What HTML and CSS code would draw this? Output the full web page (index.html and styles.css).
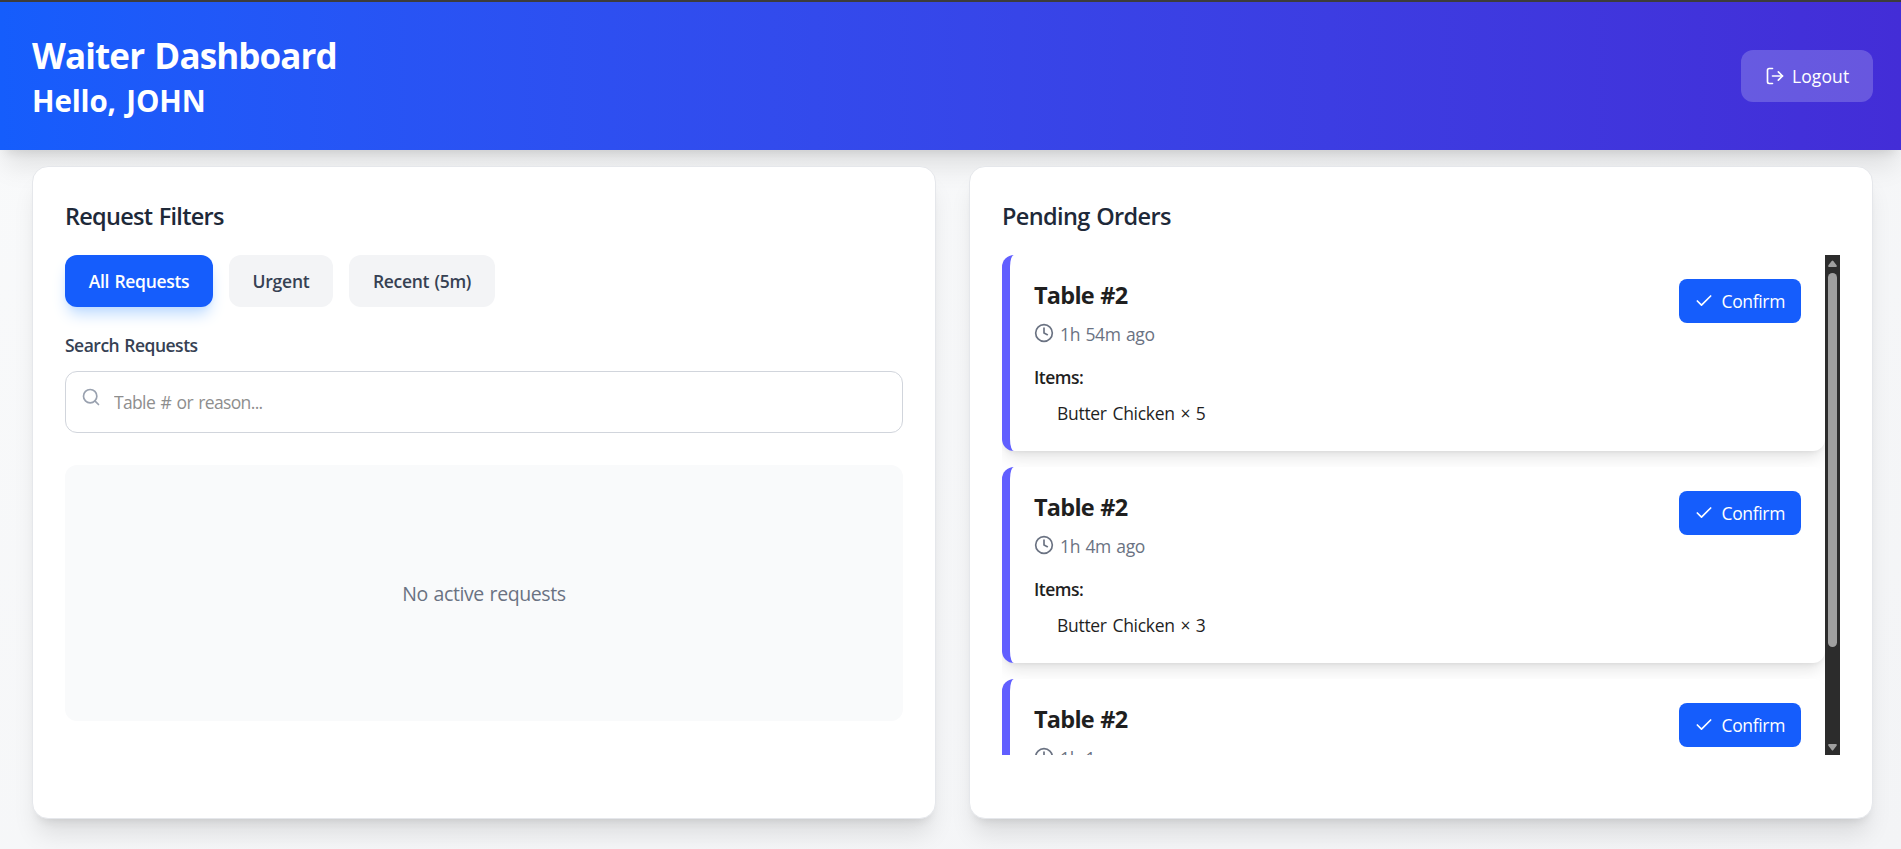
FILE: index.html
```html
<!DOCTYPE html>
<html lang="en">
<head>
<meta charset="utf-8">
<title>Waiter Dashboard</title>
<link rel="stylesheet" href="styles.css">
</head>
<body>
<svg class="sprite" aria-hidden="true">
  <symbol id="logout" viewBox="0 0 24 24"><path d="M9 21H5a2 2 0 0 1-2-2V5a2 2 0 0 1 2-2h4"/><polyline points="16 17 21 12 16 7"/><line x1="21" y1="12" x2="9" y2="12"/></symbol>
  <symbol id="search" viewBox="0 0 24 24"><circle cx="11" cy="11" r="8"/><line x1="21" y1="21" x2="16.65" y2="16.65"/></symbol>
  <symbol id="clock" viewBox="0 0 24 24"><circle cx="12" cy="12" r="10"/><polyline points="12 6 12 12 16 14"/></symbol>
  <symbol id="check" viewBox="0 0 24 24"><polyline points="20 6 9 17 4 12"/></symbol>
</svg>
<header class="header">
  <div class="greeting">
    <h1 class="title">Waiter Dashboard</h1>
    <h2 class="hello">Hello, JOHN</h2>
  </div>
  <button class="logout"><svg class="icon"><use href="#logout"/></svg><span>Logout</span></button>
</header>
<main class="main">
  <section class="panel">
    <h2 class="panel-title filters-title">Request Filters</h2>
    <div class="filters">
      <button class="filter filter-all">All Requests</button>
      <button class="filter filter-urgent">Urgent</button>
      <button class="filter filter-recent">Recent (5m)</button>
    </div>
    <label class="label" for="q">Search Requests</label>
    <div class="search">
      <svg class="icon search-icon"><use href="#search"/></svg>
      <input class="search-input" id="q" type="text" placeholder="Table # or reason...">
    </div>
    <div class="empty">No active requests</div>
  </section>
  <section class="panel">
    <h2 class="panel-title orders-title">Pending Orders</h2>
    <div class="scroller">
      <div class="orders">
        <article class="order">
          <div class="order-head">
            <div>
              <h3 class="table">Table #2</h3>
              <p class="time"><svg class="icon"><use href="#clock"/></svg><span>1h 54m ago</span></p>
            </div>
            <button class="confirm"><svg class="icon"><use href="#check"/></svg><span>Confirm</span></button>
          </div>
          <h4 class="items">Items:</h4>
          <p class="item">Butter Chicken × 5</p>
        </article>
        <article class="order">
          <div class="order-head">
            <div>
              <h3 class="table">Table #2</h3>
              <p class="time"><svg class="icon"><use href="#clock"/></svg><span>1h 4m ago</span></p>
            </div>
            <button class="confirm"><svg class="icon"><use href="#check"/></svg><span>Confirm</span></button>
          </div>
          <h4 class="items">Items:</h4>
          <p class="item">Butter Chicken × 3</p>
        </article>
        <article class="order">
          <div class="order-head">
            <div>
              <h3 class="table">Table #2</h3>
              <p class="time"><svg class="icon"><use href="#clock"/></svg><span>1h 1m ago</span></p>
            </div>
            <button class="confirm"><svg class="icon"><use href="#check"/></svg><span>Confirm</span></button>
          </div>
        </article>
      </div>
      <div class="scrollbar">
        <svg class="arrow" viewBox="0 0 9 7"><path d="M3.7 1Q4.5-.2 5.3 1L8.6 5.2Q9.2 7 8 7H1Q-.2 7 .4 5.2Z"/></svg>
        <div class="thumb"></div>
        <svg class="arrow arrow-down" viewBox="0 0 9 7"><path d="M3.7 6Q4.5 7.2 5.3 6L8.6 1.8Q9.2 0 8 0H1Q-.2 0 .4 1.8Z"/></svg>
      </div>
    </div>
  </section>
</main>
</body>
</html>
```
FILE: styles.css
```css
* { box-sizing: border-box; margin: 0; padding: 0; }
body {
  height: 849px;
  overflow: hidden;
  font: 400 17.5px/27px "Open Sans", "Noto Sans", sans-serif;
  color: #1f1f1f;
  background: linear-gradient(to bottom right, #f9fafb, #f3f4f6);
  border-top: 2px solid #3c3c3c;
}
.sprite { display: none; }
button { border: 0; font: inherit; display: flex; align-items: center; white-space: nowrap; }
.icon {
  width: 20px; height: 20px; flex: none;
  fill: none; stroke: currentColor; stroke-width: 2;
  stroke-linecap: round; stroke-linejoin: round;
}
.header {
  height: 148px;
  padding: 0 28px 0 32px;
  display: flex; align-items: center; justify-content: space-between;
  color: #fff;
  background: linear-gradient(to right in oklab, #155dfc, #432dd7);
  box-shadow: 0 20px 25px -5px rgba(0,0,0,.1), 0 8px 10px -6px rgba(0,0,0,.1);
}
.greeting { padding-top: 4px; }
.title { font-size: 35px; line-height: 45px; font-weight: 700; letter-spacing: -.88px; word-spacing: 2px; }
.hello { font-size: 29.5px; line-height: 45px; font-weight: 700; letter-spacing: -.15px; word-spacing: 3px; }
.logout {
  width: 132px; height: 52px; padding-left: 24px; gap: 7px;
  border-radius: 12px; color: #fff; background: rgba(255,255,255,.2);
  letter-spacing: .1px;
}
.main {
  display: grid; grid-template-columns: 1fr 1fr; gap: 33px;
  padding: 16px 28px 0 32px;
}
.panel {
  height: 653px; padding: 31.5px 32px;
  border: 1px solid #e5e7eb; border-radius: 16px; background: #fff;
  box-shadow: 0 20px 25px -5px rgba(0,0,0,.1), 0 8px 10px -6px rgba(0,0,0,.1);
}
.panel-title {
  font-size: 23.5px; line-height: 35px; font-weight: 540; word-spacing: 1px;
  color: #1e2939; margin-bottom: 21.5px;
}
.filters-title { letter-spacing: -.72px; }
.orders-title { letter-spacing: -.62px; }
.filters { display: flex; gap: 16px; }
.filter {
  height: 52px; justify-content: center; border-radius: 12px;
  font-weight: 600; color: #364153; background: #f3f4f6; word-spacing: 1px;
}
.filter-all {
  width: 148px; letter-spacing: -.3px; color: #fff; background: #155dfc;
  box-shadow: 0 10px 15px -3px #bedbff, 0 4px 6px -4px #bedbff;
}
.filter-urgent { width: 104px; letter-spacing: -.2px; }
.filter-recent { width: 146px; letter-spacing: -.3px; }
.label {
  display: block; margin: 25px 0 12px;
  font-weight: 600; color: #364153; letter-spacing: -.5px; word-spacing: 1px;
}
.search { position: relative; }
.search-input {
  display: block; width: 100%; height: 62px; padding: 0 16px 0 48px;
  border: 1px solid #d1d5dc; border-radius: 12px; outline: 0; background: #fff;
  font: inherit; letter-spacing: -.65px; word-spacing: 1.5px;
}
.search-input::placeholder { color: #8e8e8e; }
.search-icon { position: absolute; left: 16px; top: 16px; color: #99a1af; }
.empty {
  height: 256px; margin-top: 32px; border-radius: 12px; background: #f9fafb;
  display: flex; align-items: center; justify-content: center;
  font-size: 19.5px; letter-spacing: -.4px; word-spacing: 1px; color: #6a7282;
}
.scroller { height: 500px; display: flex; overflow: hidden; }
.orders { flex: 1; overflow: hidden; display: flex; flex-direction: column; gap: 16px; }
.order {
  flex: none; height: 196px; padding: 24px;
  border-left: 8px solid #615fff; border-radius: 12px; background: #fff;
  box-shadow: 0 10px 15px -3px rgba(0,0,0,.1), 0 4px 6px -4px rgba(0,0,0,.1);
}
.order-head { display: flex; justify-content: space-between; align-items: flex-start; }
.table { font-size: 23.5px; line-height: 33px; font-weight: 700; letter-spacing: -.75px; word-spacing: 1px; }
.time {
  display: flex; align-items: center; gap: 6px; margin-top: 8px;
  color: #6a7282; letter-spacing: -.3px; word-spacing: 1px;
}
.time .icon { margin-top: -2px; }
.time span { padding-top: 1px; }
.confirm {
  width: 122px; height: 44px; padding-left: 15px; gap: 7.5px;
  border-radius: 8px; color: #fff; background: #155dfc; letter-spacing: -.35px;
}
.items { font-size: 17.5px; font-weight: 600; letter-spacing: -.5px; margin-top: 16px; }
.item { padding-left: 23px; margin-top: 9px; letter-spacing: -.3px; word-spacing: 1.5px; }
.scrollbar {
  width: 15px; background: #2c2c2c; padding: 5px 3px 4px;
  display: flex; flex-direction: column; align-items: center;
}
.thumb { width: 9px; height: 374px; margin-top: 6px; border-radius: 5px; background: #9f9f9f; }
.arrow { width: 9px; height: 7px; fill: #9f9f9f; }
.arrow-down { margin-top: auto; }
```
